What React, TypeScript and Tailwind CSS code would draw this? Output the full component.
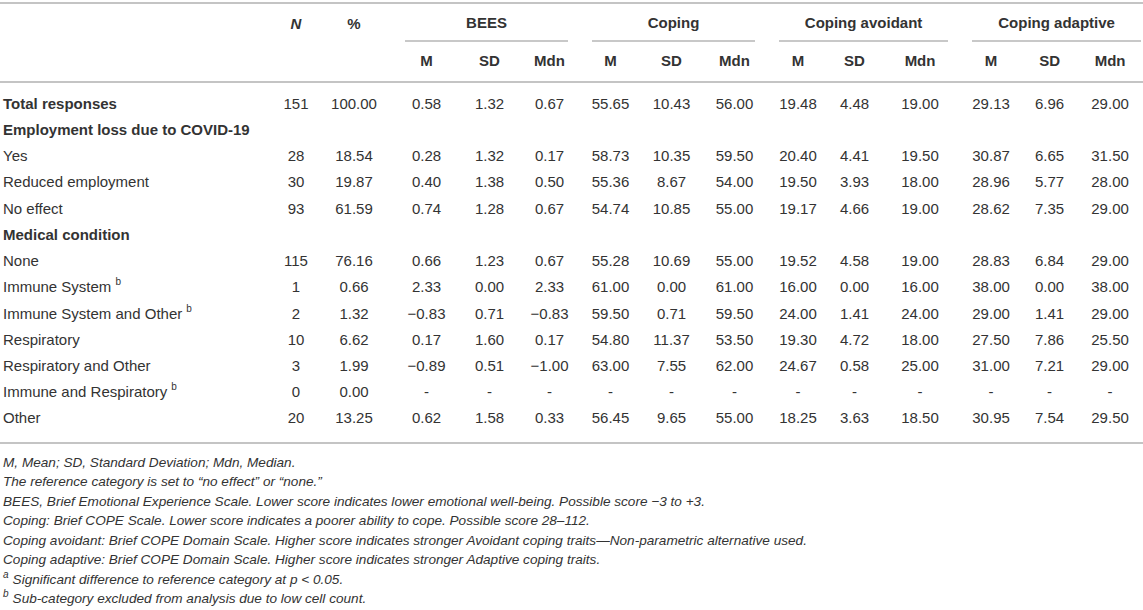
import React from 'react';

type Row = {
    label: string;
    sup?: string;
    heading?: boolean;
    bold?: boolean;
    values?: string[];
};

const rows: Row[] = [
    { label: 'Total responses', bold: true, values: ['151', '100.00', '0.58', '1.32', '0.67', '55.65', '10.43', '56.00', '19.48', '4.48', '19.00', '29.13', '6.96', '29.00'] },
    { label: 'Employment loss due to COVID-19', heading: true },
    { label: 'Yes', values: ['28', '18.54', '0.28', '1.32', '0.17', '58.73', '10.35', '59.50', '20.40', '4.41', '19.50', '30.87', '6.65', '31.50'] },
    { label: 'Reduced employment', values: ['30', '19.87', '0.40', '1.38', '0.50', '55.36', '8.67', '54.00', '19.50', '3.93', '18.00', '28.96', '5.77', '28.00'] },
    { label: 'No effect', values: ['93', '61.59', '0.74', '1.28', '0.67', '54.74', '10.85', '55.00', '19.17', '4.66', '19.00', '28.62', '7.35', '29.00'] },
    { label: 'Medical condition', heading: true },
    { label: 'None', values: ['115', '76.16', '0.66', '1.23', '0.67', '55.28', '10.69', '55.00', '19.52', '4.58', '19.00', '28.83', '6.84', '29.00'] },
    { label: 'Immune System', sup: 'b', values: ['1', '0.66', '2.33', '0.00', '2.33', '61.00', '0.00', '61.00', '16.00', '0.00', '16.00', '38.00', '0.00', '38.00'] },
    { label: 'Immune System and Other', sup: 'b', values: ['2', '1.32', '\u22120.83', '0.71', '\u22120.83', '59.50', '0.71', '59.50', '24.00', '1.41', '24.00', '29.00', '1.41', '29.00'] },
    { label: 'Respiratory', values: ['10', '6.62', '0.17', '1.60', '0.17', '54.80', '11.37', '53.50', '19.30', '4.72', '18.00', '27.50', '7.86', '25.50'] },
    { label: 'Respiratory and Other', values: ['3', '1.99', '\u22120.89', '0.51', '\u22121.00', '63.00', '7.55', '62.00', '24.67', '0.58', '25.00', '31.00', '7.21', '29.00'] },
    { label: 'Immune and Respiratory', sup: 'b', values: ['0', '0.00', '-', '-', '-', '-', '-', '-', '-', '-', '-', '-', '-', '-'] },
    { label: 'Other', values: ['20', '13.25', '0.62', '1.58', '0.33', '56.45', '9.65', '55.00', '18.25', '3.63', '18.50', '30.95', '7.54', '29.50'] },
];

const widths = [268, 56, 69, 67, 59, 61, 61, 61, 65, 62, 51, 80, 62, 55, 66];
const groups = ['BEES', 'Coping', 'Coping avoidant', 'Coping adaptive'];

const Sup = ({ children }: { children: React.ReactNode }) => (
    <sup className="text-[10px] relative -top-[7px] ml-[4px]">{children}</sup>
);

export default function App() {
    return (
        <div className="w-[1143px] h-[610px] bg-white text-[#333] overflow-hidden" style={{ fontFamily: '"Liberation Sans", Arial, sans-serif' }}>
            <table className="table-fixed border-collapse w-[1143px] mt-[2px] text-[15px]">
                <colgroup>
                    {widths.map((w, i) => (
                        <col key={i} style={{ width: w }} />
                    ))}
                </colgroup>
                <thead className="border-t-2 border-b-2 border-[#c4c4c4]">
                    <tr className="h-[38px]">
                        <th />
                        <th className="font-bold italic text-center align-middle pt-[2px]">N</th>
                        <th className="font-bold text-center pr-[9px] pt-[2px]">%</th>
                        {groups.map((g, i) => (
                            <th key={g} colSpan={3} className={`font-bold text-center pt-[2px] ${i === 3 ? 'pl-3 pr-[2px]' : 'px-3'}`}>
                                <div className="border-b-2 border-[#c8c8c8] h-[36px] flex items-center justify-center">{g}</div>
                            </th>
                        ))}
                    </tr>
                    <tr className="h-[40px]">
                        <th />
                        <th />
                        <th />
                        {groups.flatMap((g) =>
                            ['M', 'SD', 'Mdn'].map((s) => (
                                <th key={g + s} className="font-bold text-center pb-[1px]">
                                    {s}
                                </th>
                            ))
                        )}
                    </tr>
                </thead>
                <tbody className="border-b-2 border-[#c4c4c4]">
                    {rows.map((r, i) => (
                        <tr key={r.label} className={i === 0 ? 'h-[35px]' : i === rows.length - 1 ? 'h-[37px]' : 'h-[26.25px]'}>
                            <td className={`pl-[3px] whitespace-nowrap ${i === 0 ? 'pt-[9px]' : ''} ${i === rows.length - 1 ? 'pb-[11px]' : ''} ${r.bold || r.heading ? 'font-bold' : ''}`}>
                                {r.label}
                                {r.sup && <Sup>{r.sup}</Sup>}
                            </td>
                            {r.values
                                ? r.values.map((v, j) => (
                                      <td
                                          key={j}
                                          className={`text-center whitespace-nowrap ${j === 1 ? 'pr-[9px]' : ''} ${i === 0 ? 'pt-[9px]' : ''} ${i === rows.length - 1 ? 'pb-[11px]' : ''}`}
                                      >
                                          {v}
                                      </td>
                                  ))
                                : <td colSpan={14} />}
                        </tr>
                    ))}
                </tbody>
            </table>

            {/* Footnotes */}
            <div className="pl-[3px] pt-[9px] text-[13.6px] italic leading-[19.5px]">
                <p>M, Mean; SD, Standard Deviation; Mdn, Median.</p>
                <p>The reference category is set to “no effect” or “none.”</p>
                <p>BEES, Brief Emotional Experience Scale. Lower score indicates lower emotional well-being. Possible score −3 to +3.</p>
                <p>Coping: Brief COPE Scale. Lower score indicates a poorer ability to cope. Possible score 28–112.</p>
                <p>Coping avoidant: Brief COPE Domain Scale. Higher score indicates stronger Avoidant coping traits—Non-parametric alternative used.</p>
                <p>Coping adaptive: Brief COPE Domain Scale. Higher score indicates stronger Adaptive coping traits.</p>
                <p>
                    <sup className="text-[10px] relative -top-[6px] mr-[4px]">a</sup>Significant difference to reference category at p &lt; 0.05.
                </p>
                <p>
                    <sup className="text-[10px] relative -top-[6px] mr-[4px]">b</sup>Sub-category excluded from analysis due to low cell count.
                </p>
            </div>
        </div>
    );
}
